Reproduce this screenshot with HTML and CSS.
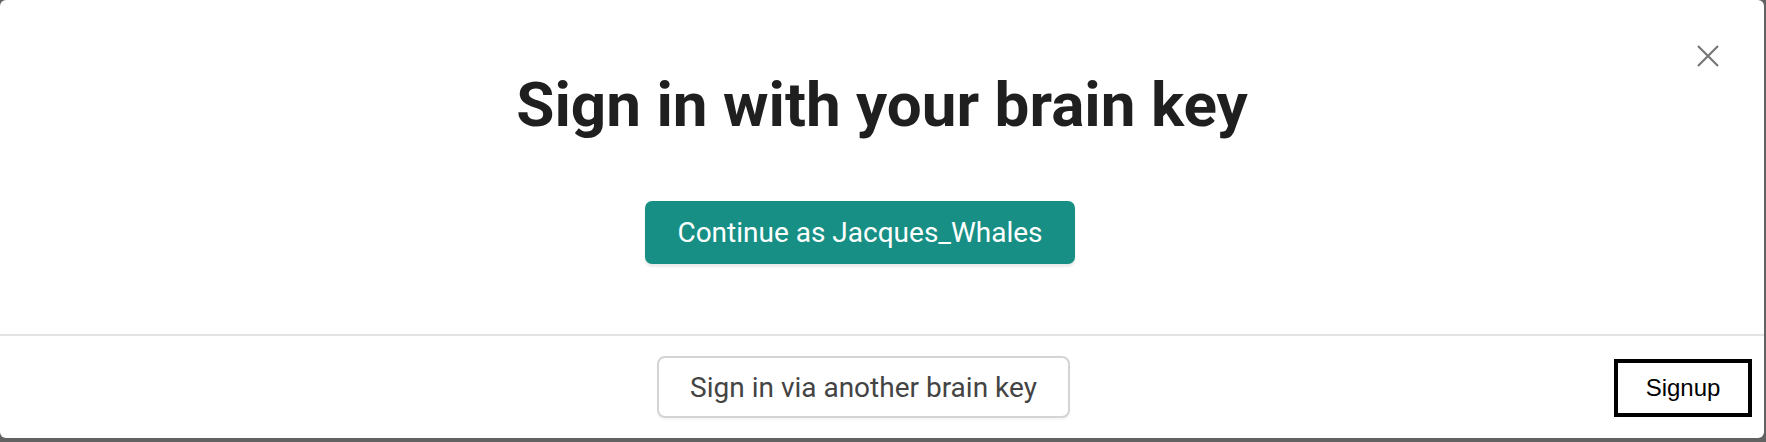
FILE: index.html
```html
<!DOCTYPE html>
<html lang="en">

<head>
    <meta charset="UTF-8">
    <meta name="viewport" content="width=device-width, initial-scale=1.0">
    <title>Sign in</title>
    <link rel="stylesheet" href="styles.css">
</head>

<body>
    <div class="modal">
        <span class="close" title="Close">
            <svg width="24" height="24" viewBox="0 0 24 24">
                <path d="M2 2 L22 22 M22 2 L2 22" stroke="#767676" stroke-width="2.2" fill="none" />
            </svg>
        </span>

        <div class="modal-header">
            <h1 class="heading">Sign in with your brain key</h1>
            <div class="primary-row">
                <button class="button button-primary">Continue as Jacques_Whales</button>
            </div>
        </div>

        <div class="modal-footer">
            <div class="spacer"></div>
            <button class="button button-secondary">Sign in via another brain key</button>
            <div class="footer-right">
                <button class="signup">Signup</button>
            </div>
        </div>
    </div>
</body>

</html>
```

FILE: styles.css
```css
body {
    margin: 0;
    padding: 0;
    background-color: #626262;
    font-family: Roboto, "Noto Sans", Arial, sans-serif;
    height: 442px;
    overflow: hidden;
}

.modal {
    position: relative;
    width: 1764px;
    height: 438px;
    background-color: #fff;
    border-radius: 6px;
    display: flex;
    flex-direction: column;
}

.close {
    position: absolute;
    left: 1696px;
    top: 44px;
    width: 24px;
    height: 24px;
    cursor: pointer;
}

.close svg {
    display: block;
}

.modal-header {
    height: 334px;
    border-bottom: 2px solid #e3e3e3;
    text-align: center;
}

.heading {
    margin: 68px 0 0 0;
    font-size: 62px;
    line-height: 74px;
    font-weight: 700;
    color: #1f1f1f;
}

.primary-row {
    margin-top: 59px;
    padding-right: 44px;
    display: flex;
    justify-content: center;
}

.button {
    font-family: Roboto, "Noto Sans", Arial, sans-serif;
    font-size: 28px;
    cursor: pointer;
}

.button-primary {
    width: 430px;
    height: 63px;
    padding: 0;
    line-height: 63px;
    color: #fff;
    background-color: #178f85;
    border: none;
    border-radius: 7px;
    box-shadow: 0 3px 2px rgba(0, 0, 0, 0.08);
}

.modal-footer {
    flex: 1;
    display: flex;
    align-items: center;
    padding-right: 12px;
}

.spacer {
    flex: 1 1 0;
}

.button-secondary {
    width: 413px;
    height: 62px;
    padding: 0;
    color: #444;
    background-color: #fff;
    border: 2px solid #d4d4d4;
    border-radius: 8px;
    box-shadow: 0 2px 2px rgba(0, 0, 0, 0.04);
}

.footer-right {
    flex: 1 1 0;
    min-width: 0;
    padding-left: 25px;
    display: flex;
    justify-content: flex-end;
    padding-top: 2px;
}

.signup {
    width: 138px;
    height: 58px;
    padding: 0;
    background-color: #fff;
    border: 4px solid #000;
    font-family: "Liberation Sans", Arial, sans-serif;
    font-size: 24px;
    color: #000;
    cursor: pointer;
}
```
